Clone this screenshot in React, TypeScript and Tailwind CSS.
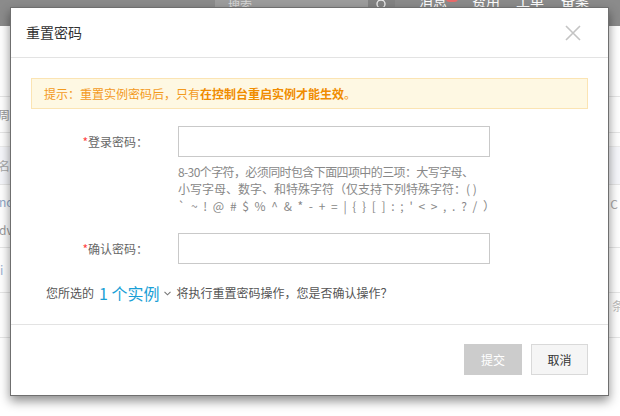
import React from "react";

function CloseIcon() {
  return (
    <svg width="16" height="16" viewBox="0 0 16 16" fill="none">
      <path d="M1 1 L15 15 M15 1 L1 15" stroke="#c4c4c4" strokeWidth="1.6" />
    </svg>
  );
}

function SearchIcon() {
  return (
    <svg width="12" height="12" viewBox="0 0 12 12" fill="none">
      <circle cx="5" cy="5" r="4" stroke="#e8e8e8" strokeWidth="1.4" />
      <path d="M8 8 L11 11" stroke="#e8e8e8" strokeWidth="1.4" />
    </svg>
  );
}

function Background() {
  return (
    <div className="flex flex-col w-[620px] h-[416px] bg-white">
      <div className="h-[26px] bg-[#8b8b8b] flex items-start text-white text-[14px] leading-[14px]">
        <div className="ml-[215px] w-[153px] h-[8px] bg-[#9d9d9d] flex items-end pl-[13px]">
          <span className="text-[#d8d8d8] text-[12px] -mb-[5px]">搜索</span>
        </div>
        <div className="w-[27px] h-[8px] bg-[#838383] flex items-end justify-center">
          <div className="-mb-[3px]"><SearchIcon /></div>
        </div>
        <div className="relative ml-[24px] -mt-[7px]">
          消息
          <span className="absolute left-[27px] top-[2px] w-[12px] h-[7px] rounded-full bg-[#e86a6a]"></span>
        </div>
        <div className="ml-[25px] -mt-[7px]">费用</div>
        <div className="ml-[16px] -mt-[7px]">工单</div>
        <div className="ml-[17px] -mt-[7px]">备案</div>
      </div>
      <div className="h-[71px] border-b border-[#e6e6e6]"></div>
      <div className="h-[36px] border-b border-[#e6e6e6] flex items-center justify-between text-[12px] text-[#999]">
        <span className="-ml-[2px]">周期</span>
        <span></span>
      </div>
      <div className="h-[14px] border-b border-[#ececec]"></div>
      <div className="h-[38px] border-b border-[#e6e6e6] bg-[#f6f7fb] flex items-center justify-between text-[12px] text-[#aaa]">
        <span className="-ml-[2px]">名称</span>
        <span></span>
      </div>
      <div className="h-[63px] border-b border-[#e6e6e6] flex flex-col justify-center gap-[14px] text-[12px] text-[#8fa7c7] relative">
        <span className="-ml-[1px] leading-[14px]">nd</span>
        <span className="-ml-[1px] leading-[14px] text-[#999]">dv</span>
        <span className="absolute right-[2px] top-[10px] text-[#aaa]">C</span>
      </div>
      <div className="h-[45px] border-b border-[#e6e6e6] flex items-center text-[12px] text-[#9ab0d0]">
        <span className="ml-0">i</span>
      </div>
      <div className="h-[45px] border-b border-[#e6e6e6] flex items-center justify-end text-[12px] text-[#bbb]">
        <span className="-mr-[4px] -mt-[18px]">条</span>
      </div>
    </div>
  );
}

export default function App() {
  return (
    <div className="relative w-[620px] h-[416px] overflow-hidden bg-white [font-family:'Noto_Sans_CJK_SC','Noto_Sans',sans-serif]">
      <Background />
      <div className="absolute left-[10px] top-[7px] w-[599px] bg-white border border-[#6f6f6f] shadow-[0_5px_10px_rgba(0,0,0,0.45)] flex flex-col">
        <div className="h-[50px] border-b border-[#e3e3e3] flex items-center justify-between pl-[15px] pr-[27px]">
          <span className="text-[14px] text-[#333]">重置密码</span>
          <CloseIcon />
        </div>
        <div className="flex flex-col pt-[20px] px-[20px] pb-[20px]">
          <div className="h-[31px] border border-[#fbe4b3] bg-[#fef8e3] flex items-center pl-[12px] text-[12px] text-[#f39a1d]">
            <span>
              提示：重置实例密码后，只有<span className="font-bold text-[#f08c00]">在控制台重启实例才能生效</span>。
            </span>
          </div>
          <div className="mt-[17px] flex items-center gap-[30px]">
            <div className="w-[117px] text-right text-[12px] text-[#666]">
              <span className="text-[#f44]">*</span>登录密码：
            </div>
            <div className="w-[312px] h-[31px] border border-[#c9c9c9] bg-white"></div>
          </div>
          <div className="ml-[147px] mt-[6px] w-[330px] text-[12px] leading-[17px] text-[#888] whitespace-nowrap">
            <div className="tracking-[-0.6px]">8-30个字符，必须同时包含下面四项中的三项：大写字母、</div>
            <div>小写字母、数字、和特殊字符（仅支持下列特殊字符：( )</div>
            <div className="[word-spacing:3px]">` ~ ! @ # $ % ^ &amp; * - + = | {"{"} {"}"} [ ] : ; ' &lt; &gt; , . ? / ）</div>
          </div>
          <div className="mt-[19px] flex items-center gap-[30px]">
            <div className="w-[117px] text-right text-[12px] text-[#666]">
              <span className="text-[#f44]">*</span>确认密码：
            </div>
            <div className="w-[312px] h-[31px] border border-[#c9c9c9] bg-white"></div>
          </div>
          <div className="mt-[18px] h-[22px] pl-[15px] flex items-center text-[12px] text-[#555]">
            <span>您所选的</span>
            <span className="ml-[5px] text-[16px] text-[#1a9fd6]">1 个实例</span>
            <svg className="ml-[5px]" width="7" height="5" viewBox="0 0 7 5" fill="none">
              <path d="M0.5 0.8 L3.5 3.8 L6.5 0.8" stroke="#777" strokeWidth="1.1" />
            </svg>
            <span className="ml-[5px]">将执行重置密码操作，您是否确认操作？</span>
          </div>
        </div>
        <div className="border-t border-[#e3e3e3] pt-[19px] pb-[20px] pr-[20px] flex justify-end gap-[9px]">
          <button className="w-[58px] h-[31px] bg-[#cccccc] text-white text-[12px]">提交</button>
          <button className="w-[57px] h-[31px] bg-[#f5f5f5] border border-[#d9d9d9] text-[#333] text-[12px]">取消</button>
        </div>
      </div>
    </div>
  );
}
